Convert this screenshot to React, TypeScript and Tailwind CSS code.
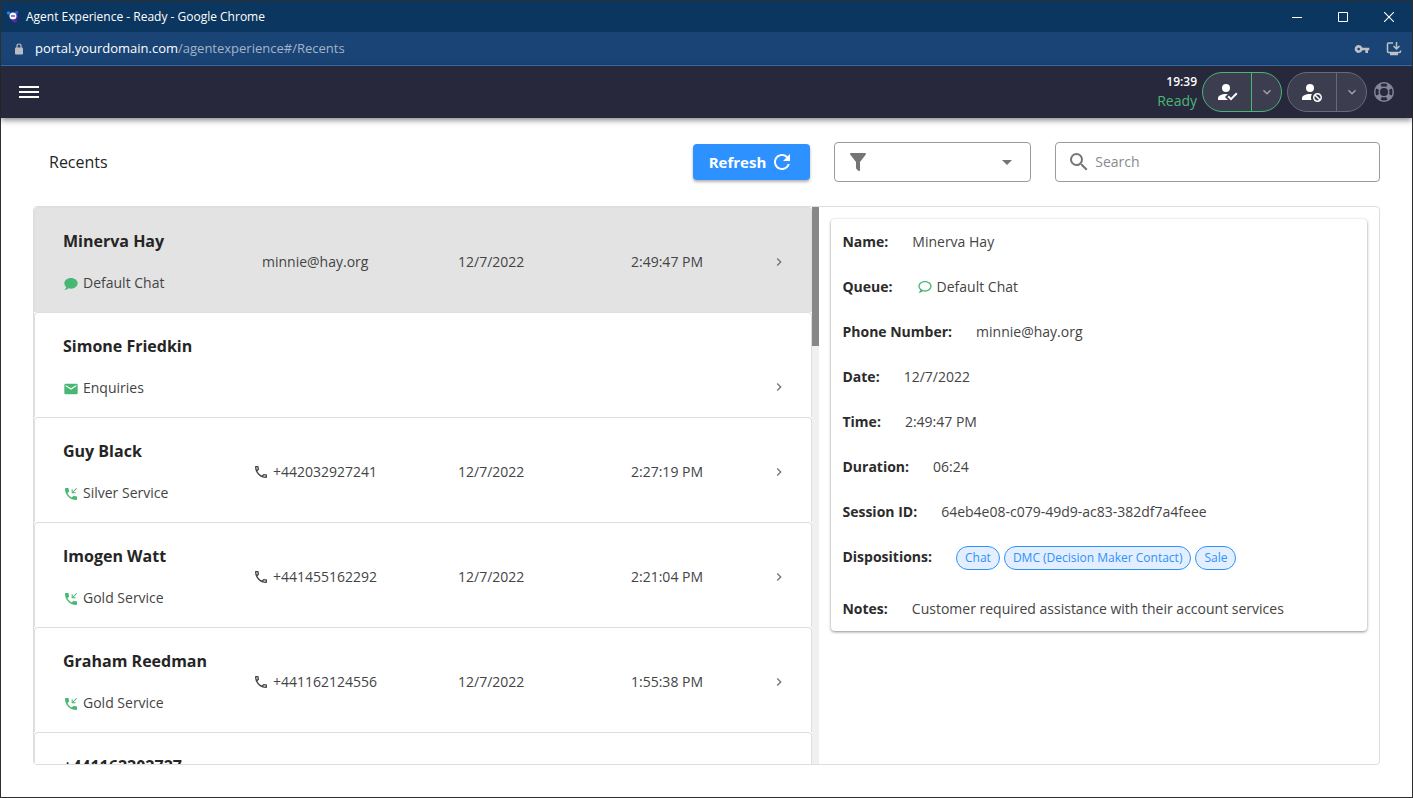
import React, { useState } from 'react';
import { MdArrowDropDown, MdEmail, MdKeyboardArrowDown, MdRefresh, MdSearch, MdVpnKey } from 'react-icons/md';

type Channel = 'chat' | 'email' | 'call';

interface Recent {
  name: string;
  channel?: Channel;
  queue?: string;
  contact?: string;
  date?: string;
  time?: string;
}

const recents: Recent[] = [
  { name: 'Minerva Hay', channel: 'chat', queue: 'Default Chat', contact: 'minnie@hay.org', date: '12/7/2022', time: '2:49:47 PM' },
  { name: 'Simone Friedkin', channel: 'email', queue: 'Enquiries' },
  { name: 'Guy Black', channel: 'call', queue: 'Silver Service', contact: '+442032927241', date: '12/7/2022', time: '2:27:19 PM' },
  { name: 'Imogen Watt', channel: 'call', queue: 'Gold Service', contact: '+441455162292', date: '12/7/2022', time: '2:21:04 PM' },
  { name: 'Graham Reedman', channel: 'call', queue: 'Gold Service', contact: '+441162124556', date: '12/7/2022', time: '1:55:38 PM' },
  { name: '+441162202727' },
];

const dispositions = ['Chat', 'DMC (Decision Maker Contact)', 'Sale'];

const paths = {
  accountCheck:
    'M21.1,12.5L22.5,13.91L15.97,20.5L12.5,17L13.9,15.59L15.97,17.67L21.1,12.5M10,17L13,20H3V18C3,15.79 6.58,14 11,14L12.89,14.11L10,17M11,4A4,4 0 0,1 15,8A4,4 0 0,1 11,12A4,4 0 0,1 7,8A4,4 0 0,1 11,4Z',
  accountCancel:
    'M10 4A4 4 0 0 0 6 8A4 4 0 0 0 10 12A4 4 0 0 0 14 8A4 4 0 0 0 10 4M17.5 13C15 13 13 15 13 17.5C13 20 15 22 17.5 22C20 22 22 20 22 17.5C22 15 20 13 17.5 13M10 14C5.58 14 2 15.79 2 18V20H11.5A6.5 6.5 0 0 1 11 17.5A6.5 6.5 0 0 1 11.95 14.14C11.32 14.06 10.68 14 10 14M17.5 14.5C19.16 14.5 20.5 15.84 20.5 17.5C20.5 18.06 20.35 18.58 20.08 19L16 14.92C16.42 14.65 16.94 14.5 17.5 14.5M14.92 16L19 20.08C18.58 20.35 18.06 20.5 17.5 20.5C15.84 20.5 14.5 19.16 14.5 17.5C14.5 16.94 14.65 16.42 14.92 16Z',
  lifebuoy:
    'M19.79,15.41C20.74,13.24 20.74,10.75 19.79,8.59L17.05,9.83C17.65,11.21 17.65,12.78 17.06,14.17L19.79,15.41M15.42,4.21C13.25,3.26 10.76,3.26 8.59,4.21L9.83,6.94C11.22,6.35 12.79,6.35 14.18,6.95L15.42,4.21M4.21,8.58C3.26,10.76 3.26,13.24 4.21,15.42L6.95,14.17C6.35,12.79 6.35,11.21 6.95,9.82L4.21,8.58M8.59,19.79C10.76,20.74 13.25,20.74 15.42,19.78L14.18,17.05C12.8,17.65 11.22,17.65 9.84,17.06L8.59,19.79M12,2A10,10 0 0,1 22,12A10,10 0 0,1 12,22A10,10 0 0,1 2,12A10,10 0 0,1 12,2M12,8A4,4 0 0,0 8,12A4,4 0 0,0 12,16A4,4 0 0,0 16,12A4,4 0 0,0 12,8Z',
  filter:
    'M14,12V19.88C14.04,20.18 13.94,20.5 13.71,20.71C13.32,21.1 12.69,21.1 12.3,20.71L10.29,18.7C10.06,18.47 9.96,18.16 10,17.87V12H9.97L4.21,4.62C3.87,4.19 3.95,3.56 4.38,3.22C4.57,3.08 4.78,3 5,3V3H19V3C19.22,3 19.43,3.08 19.62,3.22C20.05,3.56 20.13,4.19 19.79,4.62L14.03,12H14Z',
  chat: 'M12,3C17.5,3 22,6.58 22,11C22,15.42 17.5,19 12,19C10.76,19 9.57,18.82 8.47,18.5C5.55,21 2,21 2,21C4.33,18.67 4.7,17.1 4.75,16.5C3.05,15.07 2,13.13 2,11C2,6.58 6.5,3 12,3Z',
  chatOutline:
    'M12,3C6.5,3 2,6.58 2,11A7.18,7.18 0 0,0 4.75,16.5C4.75,17.1 4.33,18.67 2,21C4.37,20.89 6.64,20 8.47,18.5C9.61,18.83 10.81,19 12,19C17.5,19 22,15.42 22,11C22,6.58 17.5,3 12,3M12,17C7.58,17 4,14.31 4,11C4,7.69 7.58,5 12,5C16.42,5 20,7.69 20,11C20,14.31 16.42,17 12,17Z',
  phoneIncoming:
    'M4,3A1,1 0 0,0 3,4A17,17 0 0,0 20,21A1,1 0 0,0 21,20V16.5A1,1 0 0,0 20,15.5C18.75,15.5 17.55,15.3 16.43,14.93C16.08,14.82 15.69,14.9 15.41,15.18L13.21,17.38C10.38,15.94 8.06,13.62 6.62,10.79L8.82,8.59C9.1,8.31 9.18,7.92 9.07,7.57C8.7,6.45 8.5,5.25 8.5,4A1,1 0 0,0 7.5,3H4M19,11V9.5H15.5L21,4L20,3L14.5,8.5V5H13V11H19Z',
  phoneOutline:
    'M20,15.5C18.8,15.5 17.5,15.3 16.4,14.9C16.3,14.9 16.2,14.9 16.1,14.9C15.8,14.9 15.6,15 15.4,15.2L13.2,17.4C10.4,15.9 8,13.6 6.6,10.8L8.8,8.6C9.1,8.3 9.2,7.9 9,7.6C8.7,6.5 8.5,5.2 8.5,4C8.5,3.5 8,3 7.5,3H4C3.5,3 3,3.5 3,4C3,13.4 10.6,21 20,21C20.5,21 21,20.5 21,20V16.5C21,16 20.5,15.5 20,15.5M5,5H6.5C6.6,5.9 6.8,6.8 7,7.6L5.8,8.8C5.4,7.6 5.1,6.3 5,5M19,19C17.7,18.9 16.4,18.6 15.2,18.2L16.4,17C17.2,17.2 18.1,17.4 19,17.4V19Z',
  chevronRight: 'M8.59,16.58L13.17,12L8.59,7.41L10,6L16,12L10,18L8.59,16.58Z',
};

const Icon: React.FC<{ d: string; className: string }> = ({ d, className }) => (
  <svg viewBox="0 0 24 24" fill="currentColor" className={className} aria-hidden="true">
    <path fillRule="evenodd" d={d} />
  </svg>
);

const TitleBar: React.FC = () => (
  <div className="flex h-[31px] shrink-0 items-center bg-[#0b3660] text-white">
    <svg viewBox="0 0 14 14" className="ml-[5px] h-[14px] w-[14px]" aria-hidden="true">
      <path d="M3 4L5 2L11 2L12.500 7L10 11L6 10.500L3 8Z" fill="#4327a0" />
      <circle cx="2.500" cy="3" r="1.800" fill="#1487e8" />
      <circle cx="10.500" cy="2.400" r="1.600" fill="#1669c9" />
      <circle cx="7" cy="6" r="3.500" fill="#f4f3ff" />
      <path d="M5 6H9" stroke="#4b58ae" strokeWidth="1.400" />
      <path d="M5.500 10.500L10 9L11 11.500L8.500 13Z" fill="#65259f" />
    </svg>
    <h1 className="ml-[6px] text-xs">Agent Experience - Ready - Google Chrome</h1>
    <div className="ml-auto flex h-full">
      <button aria-label="Minimize" className="flex w-[46px] items-center justify-center">
        <svg viewBox="0 0 10 10" className="h-[10px] w-[10px]"><path d="M0 5.500H10" stroke="white" /></svg>
      </button>
      <button aria-label="Maximize" className="flex w-[46px] items-center justify-center">
        <svg viewBox="0 0 10 10" className="h-[10px] w-[10px]"><path d="M.5 .5H9.500V9.500H.5Z" fill="none" stroke="white" /></svg>
      </button>
      <button aria-label="Close" className="flex w-[46px] items-center justify-center">
        <svg viewBox="0 0 10 10" className="h-[10px] w-[10px]"><path d="M0 0L10 10M10 0L0 10" stroke="white" strokeWidth="1.100" /></svg>
      </button>
    </div>
  </div>
);

const AddressBar: React.FC = () => (
  <div className="flex h-[34px] shrink-0 items-center border-b border-[#3b74b4] bg-[#194475] text-[13px] text-[#a3b4c8]">
    <svg viewBox="0 0 8 12" className="ml-[14px] h-3 w-2" aria-hidden="true">
      <path d="M2 5V3Q2 1 4 1T6 3V5" fill="none" stroke="#b9bcc0" strokeWidth="1.200" />
      <rect y="4.500" width="8" height="7" rx="1" fill="#b9bcc0" />
    </svg>
    <p className="ml-3"><span className="text-white">portal.yourdomain.com</span>/agentexperience#/Recents</p>
    <div className="mr-[10px] ml-auto flex items-center gap-4 text-[#bfc1c4]">
      <button aria-label="Saved passwords"><MdVpnKey className="h-4 w-4" /></button>
      <button aria-label="Install app">
        <svg viewBox="0 0 16 16" className="h-4 w-4" fill="none" stroke="currentColor" strokeWidth="1.500">
          <path d="M7 2H2.500Q1.500 2 1.500 3V10.500Q1.500 11.500 2.500 11.500H13.500Q14.500 11.500 14.500 10.500V9.500" />
          <path d="M10.500 1V7.500M7.500 5L10.500 8L13.500 5" />
          <path d="M4 13H12" strokeWidth="2.500" />
        </svg>
      </button>
    </div>
  </div>
);

const Header: React.FC = () => (
  <header className="z-10 flex h-[52px] shrink-0 items-center bg-[#28283c] pr-4 pl-[18px] shadow-[0_2px_6px_rgba(0,0,0,0.5)]">
    <button aria-label="Menu">
      <svg viewBox="0 0 20 12" className="h-3 w-5" fill="white">
        <path d="M0 0H20V2H0ZM0 5H20V7H0ZM0 10H20V12H0Z" />
      </svg>
    </button>
    <div className="mb-0.5 ml-auto text-right">
      <p className="text-xs leading-5 font-semibold text-white">19:39</p>
      <p className="text-sm leading-[18px] text-[#48b774]">Ready</p>
    </div>
    <div className="ml-[5px] flex h-10 w-20 overflow-hidden rounded-full border border-[#48b774] bg-[#3d3d50]">
      <button aria-label="Go ready" className="flex flex-1 items-center justify-center text-white"><Icon d={paths.accountCheck} className="h-6 w-6" /></button>
      <button aria-label="Ready options" className="flex w-[30px] items-center justify-center border-l border-[#48b774] text-[#a2a2b0]"><MdKeyboardArrowDown className="h-4 w-4" /></button>
    </div>
    <div className="ml-[5px] flex h-10 w-20 overflow-hidden rounded-full border border-[#69697a] bg-[#3d3d50]">
      <button aria-label="Go not ready" className="flex flex-1 items-center justify-center text-white"><Icon d={paths.accountCancel} className="h-6 w-6" /></button>
      <button aria-label="Not ready options" className="flex w-[30px] items-center justify-center border-l border-[#69697a] text-[#a2a2b0]"><MdKeyboardArrowDown className="h-4 w-4" /></button>
    </div>
    <button aria-label="Help" className="ml-[5px] text-[#85859a]"><Icon d={paths.lifebuoy} className="h-6 w-6" /></button>
  </header>
);

const Toolbar: React.FC = () => (
  <div className="flex h-10 shrink-0 items-center gap-6 pl-4">
    <h2 className="flex-1 text-base text-[#252525]">Recents</h2>
    <button className="flex h-9 items-center gap-1 rounded bg-[#2d92ff] px-4 text-[15px] font-bold text-white shadow-[0_2px_3px_rgba(0,0,0,0.3)]">
      Refresh
      <MdRefresh className="h-6 w-6" />
    </button>
    <label className="flex h-10 w-[14.800%] items-center rounded border border-[#9b9b9b] px-[11px] text-[#757575]">
      <Icon d={paths.filter} className="h-6 w-6 shrink-0" />
      <select aria-label="Filter" className="h-full min-w-0 flex-1 appearance-none bg-transparent outline-none">
        <option value="" />
      </select>
      <MdArrowDropDown className="h-6 w-6 shrink-0" />
    </label>
    <label className="flex h-10 w-[24.400%] items-center gap-1 rounded border border-[#9b9b9b] px-[11px] text-[#757575]">
      <MdSearch className="h-6 w-6 shrink-0" />
      <input type="text" aria-label="Search" placeholder="Search" className="min-w-0 flex-1 bg-transparent text-sm outline-none placeholder:text-[#8a8a8a]" />
    </label>
  </div>
);

const ChannelIcon: React.FC<{ channel?: Channel }> = ({ channel }) => {
  if (channel === 'chat') return <Icon d={paths.chat} className="h-4 w-4" />;
  if (channel === 'email') return <MdEmail className="h-4 w-4" />;
  return <Icon d={paths.phoneIncoming} className="h-4 w-4" />;
};

const RecentRow: React.FC<{ recent: Recent; selected: boolean; onSelect: () => void }> = ({ recent, selected, onSelect }) => (
  <li className={`overflow-hidden rounded-t border-x border-t border-[#dedede] ${selected ? 'bg-[#e3e3e3]' : 'bg-white'}`}>
    <button
      onClick={onSelect}
      className="grid h-[104px] w-full grid-cols-[199px_196px_173px_1fr] items-center pl-7 text-left text-sm"
    >
      <span className="flex flex-col gap-[21px]">
        <span className="text-base font-bold text-[#252525]">{recent.name}</span>
        <span className="flex h-[17px] items-center gap-1">
          {recent.queue && <span className="pt-0.5 text-[#48b774]"><ChannelIcon channel={recent.channel} /></span>}
          {recent.queue}
        </span>
      </span>
      <span className={`flex items-center gap-1 pt-1 ${recent.channel === 'call' ? '-ml-[9px]' : ''}`}>
        {recent.channel === 'call' && <Icon d={paths.phoneOutline} className="h-4 w-4" />}
        {recent.contact}
      </span>
      <span className="pt-1">{recent.date}</span>
      <span className={`flex items-center pr-6 ${recent.time ? 'pt-1' : 'pt-11'}`}>
        {recent.time}
        <Icon d={paths.chevronRight} className="ml-auto h-4 w-4 text-[#757575]" />
      </span>
    </button>
  </li>
);

const Field: React.FC<{ label: string; className?: string; children: React.ReactNode }> = ({ label, className = '', children }) => (
  <div className={`flex h-[45px] items-center gap-6 ${className}`}>
    <dt className="font-bold text-[#2b2b2b]">{label}:</dt>
    <dd>{children}</dd>
  </div>
);

const Details: React.FC = () => (
  <dl className="rounded bg-white px-[11px] text-sm shadow-[0_1px_3px_rgba(0,0,0,0.45)]">
    <Field label="Name">Minerva Hay</Field>
    <Field label="Queue">
      <span className="flex items-center gap-1">
        <Icon d={paths.chatOutline} className="h-4 w-4 text-[#48b774]" />
        Default Chat
      </span>
    </Field>
    <Field label="Phone Number">minnie@hay.org</Field>
    <Field label="Date">12/7/2022</Field>
    <Field label="Time">2:49:47 PM</Field>
    <Field label="Duration">06:24</Field>
    <Field label="Session ID">64eb4e08-c079-49d9-ac83-382df7a4feee</Field>
    <Field label="Dispositions" className="mb-[7px]">
      <span className="flex gap-1 pt-0.5">
        {dispositions.map((name) => (
          <span key={name} className="flex h-6 items-center rounded-full border border-[#2d92ff] bg-[#e3eefe] px-2 text-xs text-[#2d92ff]">{name}</span>
        ))}
      </span>
    </Field>
    <Field label="Notes">Customer required assistance with their account services</Field>
  </dl>
);

const App: React.FC = () => {
  const [selected, setSelected] = useState(0);

  return (
    <div className="flex h-screen flex-col border border-[#2f2f2f] bg-white font-['Open_Sans','Noto_Sans',sans-serif] text-[#444]">
      <TitleBar />
      <AddressBar />
      <Header />
      <main className="flex min-h-0 flex-1 flex-col gap-6 px-8 pt-6 pb-8">
        <Toolbar />
        <div className="flex min-h-0 flex-1 overflow-hidden rounded border border-[#dedede]">
          <section aria-label="Recent interactions" className="flex w-[58.400%]">
            <ul className="min-w-0 flex-1 overflow-y-auto [scrollbar-width:none]">
              {recents.map((recent, index) => (
                <RecentRow key={recent.name} recent={recent} selected={index === selected} onSelect={() => setSelected(index)} />
              ))}
            </ul>
            <div className="w-[7px] bg-[#f0f0f0]">
              <div className="h-1/4 bg-[#888]" />
            </div>
          </section>
          <section aria-label="Interaction details" className="min-w-0 flex-1 p-3">
            <Details />
          </section>
        </div>
      </main>
    </div>
  );
};

export default App;
